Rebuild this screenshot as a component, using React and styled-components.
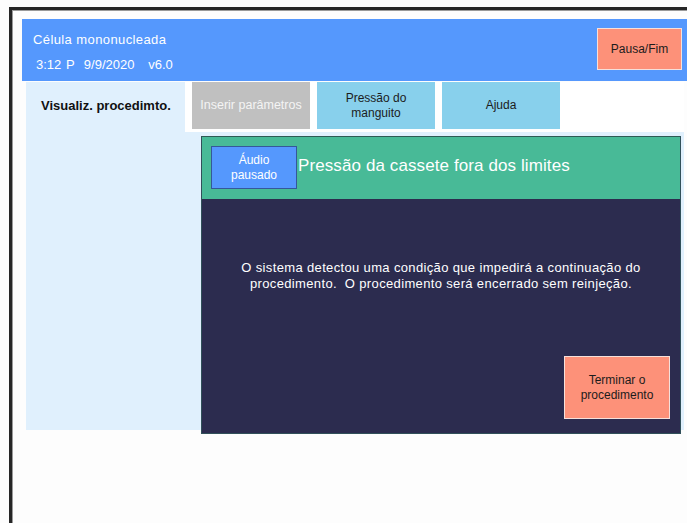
import React from "react";
import styled, { createGlobalStyle } from "styled-components";

const GlobalStyle = createGlobalStyle`
  html, body {
    margin: 0;
    padding: 0;
    background: #fdfdfd;
    font-family: "Liberation Sans", Arial, sans-serif;
  }
`;

const Frame = styled.div`
  margin: 7px 0 0 9px;
  height: 516px;
  box-sizing: border-box;
  border-left: 3px solid #262626;
  border-top: 3px solid #262626;
  box-shadow: inset 1px 1px 0 #9a9a9a;
  padding: 9px 0 0 10px;
`;

const Header = styled.div`
  height: 62px;
  background: #5598fd;
  display: flex;
  justify-content: space-between;
  align-items: flex-start;
  padding: 0 5px 0 11px;
`;

const HeaderText = styled.div`
  color: #ffffff;
  display: flex;
  flex-direction: column;
`;

const Title = styled.div`
  font-size: 13px;
  margin-top: 13px;
  letter-spacing: 0.4px;
`;

const Meta = styled.div`
  font-size: 13px;
  margin-top: 10px;
  padding-left: 3px;
  word-spacing: 1px;
`;

const Button = styled.div`
  box-sizing: border-box;
  display: flex;
  align-items: center;
  justify-content: center;
  text-align: center;
  font-size: ${(p) => p.$size || 12}px;
  line-height: 15px;
  color: ${(p) => p.$color || "#1c1c1c"};
  background: ${(p) => p.$bg};
  border: 1px solid ${(p) => p.$border || "transparent"};
  width: ${(p) => p.$w}px;
  height: ${(p) => p.$h}px;
`;

const PauseButton = styled(Button)`
  margin-top: 9px;
`;

const Workspace = styled.div`
  position: relative;
  margin: 1px 3px 0 4px;
  height: 348px;
  display: flex;
  flex-direction: column;
`;

const TabRow = styled.div`
  height: 50px;
  display: flex;
  gap: 7px;
  background: #ffffff;
`;

const ActiveTab = styled.div`
  width: 159px;
  background: #e0f0fd;
  font-size: 13px;
  font-weight: bold;
  color: #111;
  padding: 16px 0 0 15px;
  box-sizing: border-box;
`;

const Panel = styled.div`
  flex: 1;
  background: #e0f0fd;
`;

const Dialog = styled.div`
  position: absolute;
  left: 175px;
  top: 54px;
  width: 480px;
  height: 298px;
  box-sizing: border-box;
  border: 1px solid #31505a;
  border-top-color: #2e5a55;
  display: flex;
  flex-direction: column;
`;

const DialogHead = styled.div`
  height: 62px;
  flex: none;
  background: #48ba97;
  display: flex;
  align-items: flex-start;
  padding: 9px 0 0 9px;
  box-sizing: border-box;
`;

const DialogTitle = styled.div`
  color: #ffffff;
  font-size: 17px;
  margin: 10px 0 0 1px;
  letter-spacing: 0.1px;
`;

const DialogBody = styled.div`
  flex: 1;
  background: #2c2c4f;
  display: flex;
  flex-direction: column;
  align-items: center;
  padding-top: 61px;
  position: relative;
`;

const Message = styled.p`
  margin: 0;
  color: #ffffff;
  font-size: 13px;
  line-height: 16px;
  letter-spacing: 0.35px;
  text-align: center;
  white-space: pre-wrap;
`;

const Actions = styled.div`
  margin-top: auto;
  align-self: stretch;
  display: flex;
  justify-content: flex-end;
  padding: 0 10px 14px 0;
`;

export default function App() {
  return (
    <>
      <GlobalStyle />
      <Frame>
        <Header>
          <HeaderText>
            <Title>Célula mononucleada</Title>
            <Meta>3:12 P&nbsp; 9/9/2020 &nbsp; v6.0</Meta>
          </HeaderText>
          <PauseButton $bg="#fd9179" $border="#f6e0da" $w={85} $h={42}>
            Pausa/Fim
          </PauseButton>
        </Header>
        <Workspace>
          <TabRow>
            <ActiveTab>Visualiz. procedimto.</ActiveTab>
            <Button $bg="#c0c0c0" $color="#f4f4f4" $size={12.5} $w={118} $h={47}>
              Inserir parâmetros
            </Button>
            <Button $bg="#88d0ec" $w={118} $h={47}>
              Pressão do
              <br />
              manguito
            </Button>
            <Button $bg="#88d0ec" $w={118} $h={47}>
              Ajuda
            </Button>
          </TabRow>
          <Panel />
          <Dialog>
            <DialogHead>
              <Button $bg="#5598fd" $color="#ffffff" $border="#35589a" $w={86} $h={43}>
                Áudio
                <br />
                pausado
              </Button>
              <DialogTitle>Pressão da cassete fora dos limites</DialogTitle>
            </DialogHead>
            <DialogBody>
              <Message>
                {"O sistema detectou uma condição que impedirá a continuação do\nprocedimento.  O procedimento será encerrado sem reinjeção."}
              </Message>
              <Actions>
                <Button $bg="#fd9179" $border="#f6e0da" $w={106} $h={63}>
                  Terminar o
                  <br />
                  procedimento
                </Button>
              </Actions>
            </DialogBody>
          </Dialog>
        </Workspace>
      </Frame>
    </>
  );
}
